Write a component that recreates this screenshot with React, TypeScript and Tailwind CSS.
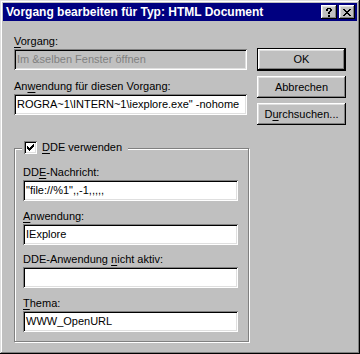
import type { ReactNode } from 'react';

const raised = 'shadow-[inset_-1px_-1px_#000,inset_1px_1px_#fff,inset_-2px_-2px_#808080,inset_2px_2px_#dfdfdf]';
const sunken = 'shadow-[inset_1px_1px_#808080,inset_-1px_-1px_#fff,inset_2px_2px_#000,inset_-2px_-2px_#dfdfdf]';

const U = ({ c }: { c: string }) => <span className="underline underline-offset-[2px]">{c}</span>;

function Label({ children, className = '' }: { children: ReactNode; className?: string }) {
  return <div className={`h-[13px] leading-[13px] whitespace-nowrap ${className}`}>{children}</div>;
}

function Field({ value, disabled, className = '' }: { value: string; disabled?: boolean; className?: string }) {
  return (
    <div className={`h-[21px] ${sunken} ${disabled ? 'bg-[#c0c0c0] text-[#808080]' : 'bg-white text-black'} flex items-center pl-[3px] overflow-hidden whitespace-nowrap leading-[13px] ${className}`}>
      {value}
    </div>
  );
}

function Btn({ children, def, className = '' }: { children: ReactNode; def?: boolean; className?: string }) {
  return (
    <div className={`w-[89px] ${def ? 'h-[23px] border border-black' : 'h-[22px]'} ${className}`}>
      <div className={`h-full w-full ${raised} flex items-center justify-center leading-[13px]`}>{children}</div>
    </div>
  );
}

// pixel glyphs for the caption buttons and the check box
const CloseGlyph = () => (
  <svg width="8" height="7" viewBox="0 0 8 7" shapeRendering="crispEdges">
    <path d="M0 0h2v1H0zM6 0h2v1H6zM1 1h2v1H1zM5 1h2v1H5zM2 2h4v1H2zM3 3h2v1H3zM2 4h4v1H2zM1 5h2v1H1zM5 5h2v1H5zM0 6h2v1H0zM6 6h2v1H6z" fill="#000" />
  </svg>
);

const HelpGlyph = () => (
  <svg width="6" height="9" viewBox="0 0 6 9" shapeRendering="crispEdges">
    <path d="M1 0h4v1H1zM0 1h2v2H0zM4 1h2v2H4zM3 3h2v1H3zM2 4h2v2H2zM2 7h2v2H2z" fill="#000" />
  </svg>
);

const CheckMark = () => (
  <svg width="7" height="7" viewBox="0 0 7 7" shapeRendering="crispEdges">
    <path d="M0 2h1v3H0zM1 3h1v3H1zM2 4h1v3H2zM3 3h1v3H3zM4 2h1v3H4zM5 1h1v3H5zM6 0h1v3H6z" fill="#000" />
  </svg>
);

export default function App() {
  return (
    <div className="w-[360px] h-[354px] bg-[#c0c0c0] p-[3px] flex flex-col text-[11px] text-black font-['Liberation_Sans',Arial,sans-serif] shadow-[inset_-1px_-1px_#000,inset_1px_1px_#dfdfdf,inset_-2px_-2px_#808080,inset_2px_2px_#fff]">
      {/* caption */}
      <div className="h-[18px] bg-[#000080] flex items-center pl-[3px] pr-[2px]">
        <span className="flex-1 text-white font-bold text-[12px] leading-[14px] whitespace-nowrap">
          Vorgang bearbeiten für Typ: HTML Document
        </span>
        <div className={`w-[16px] h-[14px] bg-[#c0c0c0] ${raised} flex items-center justify-center pt-[1px]`}>
          <HelpGlyph />
        </div>
        <div className={`w-[16px] h-[14px] ml-[2px] bg-[#c0c0c0] ${raised} flex items-center justify-center`}>
          <CloseGlyph />
        </div>
      </div>

      <div className="flex pl-[11px] gap-[8px]">
        {/* left column */}
        <div className="w-[235px] flex flex-col">
          <Label className="mt-[14px]"><U c="V" />organg:</Label>
          <Field className="mt-[1px] w-[233px]" disabled value="Im &selben Fenster öffnen" />
          <Label className="mt-[10px]">An<U c="w" />endung für diesen Vorgang:</Label>
          <Field className="mt-[1px] w-[233px]" value={'ROGRA~1\\INTERN~1\\iexplore.exe" -nohome'} />

          <div className="mt-[33px] border border-[#808080] shadow-[inset_1px_1px_#fff,1px_1px_#fff] pl-[8px] pb-[9px] flex flex-col">
            <div className="-mt-[8px] ml-[-1px] self-start bg-[#c0c0c0] pl-[2px] pr-[6px] flex items-center h-[13px]">
              <div className={`w-[13px] h-[13px] bg-white ${sunken} flex items-center justify-center`}>
                <CheckMark />
              </div>
              <span className="ml-[5px] leading-[13px]"><U c="D" />DE verwenden</span>
            </div>
            <Label className="mt-[12px]">DD<U c="E" />-Nachricht:</Label>
            <Field className="mt-[1px] w-[215px]" value={'"file://%1",,-1,,,,,'} />
            <Label className="mt-[9px]"><U c="A" />nwendung:</Label>
            <Field className="mt-[1px] w-[215px]" value="IExplore" />
            <Label className="mt-[8px]">DDE-Anwendung <U c="n" />icht aktiv:</Label>
            <Field className="mt-[1px] w-[215px]" value="" />
            <Label className="mt-[9px]"><U c="T" />hema:</Label>
            <Field className="mt-[1px] w-[215px]" value="WWW_OpenURL" />
          </div>
        </div>

        {/* right column */}
        <div className="w-[89px] flex flex-col">
          <Btn def className="mt-[27px]">OK</Btn>
          <Btn className="mt-[5px]">Abbrechen</Btn>
          <Btn className="mt-[5px]">D<U c="u" />rchsuchen...</Btn>
        </div>
      </div>
    </div>
  );
}
